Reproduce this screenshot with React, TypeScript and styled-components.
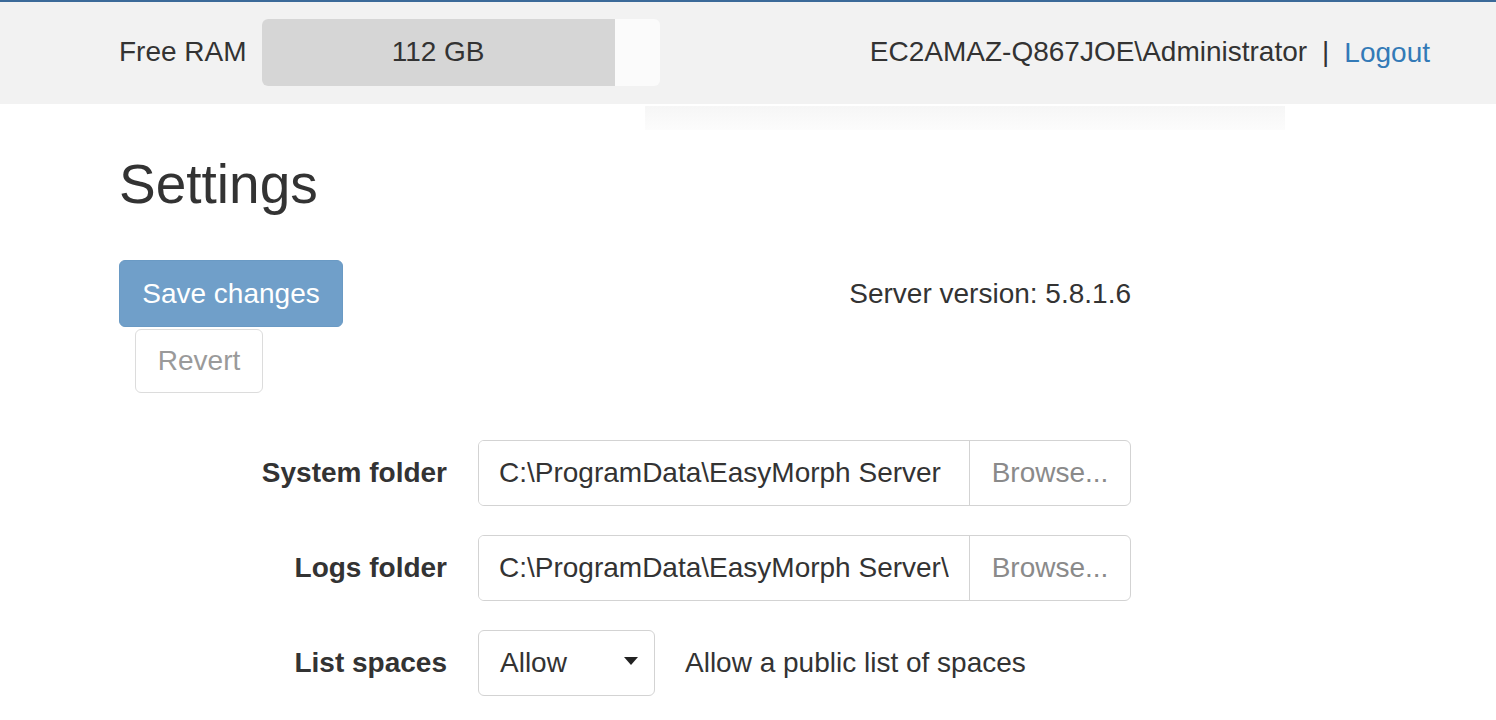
import React, {FC} from 'react';
import styled, {createGlobalStyle} from 'styled-components';

const GlobalStyle = createGlobalStyle`
  html, body {
    margin: 0;
    padding: 0;
    background: #ffffff;
    font-family: 'Liberation Sans', Arial, sans-serif;
    font-size: 28px;
    color: #333333;
  }
  * {
    box-sizing: border-box;
  }
`;

const Page = styled.div`
  width: 1496px;
  height: 720px;
  overflow: hidden;
  position: relative;
  border-top: 2px solid #3b6a99;
`;

const TopBar = styled.div`
  display: flex;
  align-items: center;
  height: 102px;
  padding: 0 66px 0 119px;
  background: #f2f2f2;
`;

const RamLabel = styled.span`
  margin-right: 15px;
  margin-top: -3px;
`;

const RamBar = styled.div`
  display: flex;
  width: 398px;
  height: 67px;
  border-radius: 6px;
  overflow: hidden;
  background: #fbfbfb;
  margin-top: -2px;
`;

const RamFill = styled.div`
  display: flex;
  align-items: center;
  justify-content: center;
  height: 100%;
  background: #d6d6d6;
  color: #333333;
`;

const UserBox = styled.div`
  margin-left: auto;
  display: flex;
  align-items: center;
  gap: 15px;
  margin-top: -3px;
`;

const Separator = styled.span`
  color: #333333;
`;

const Link = styled.a`
  color: #337ab7;
  text-decoration: none;
  margin-top: 2px;
`;

const Ghost = styled.div`
  position: absolute;
  left: 645px;
  top: 104px;
  width: 640px;
  height: 24px;
  background: linear-gradient(#f6f6f6, #fcfcfc);
`;

const Content = styled.div`
  padding: 0 0 0 119px;
`;

const Title = styled.h1`
  margin: 47px 0 0;
  font-size: 55px;
  font-weight: 400;
  line-height: 66px;
  color: #333333;
`;

const ActionRow = styled.div`
  display: flex;
  align-items: center;
  width: 1012px;
  margin-top: 43px;
`;

const Version = styled.div`
  margin-left: auto;
`;

const PrimaryButton = styled.button`
  width: 224px;
  height: 67px;
  border: 1px solid #6a9ac4;
  border-radius: 6px;
  background: #709fc9;
  color: #ffffff;
  font: inherit;
  padding: 0;
`;

const DefaultButton = styled.button`
  display: block;
  width: 128px;
  height: 64px;
  margin: 2px 0 0 16px;
  border: 1px solid #dcdcdc;
  border-radius: 6px;
  background: #ffffff;
  color: #9a9a9a;
  font: inherit;
  padding: 0;
`;

const Form = styled.div`
  display: flex;
  flex-direction: column;
  gap: 29px;
  margin-top: 47px;
`;

const Row = styled.div`
  display: flex;
  align-items: center;
  height: 66px;
`;

const Label = styled.label`
  width: 359px;
  text-align: right;
  font-weight: 700;
  padding-right: 31px;
`;

const InputGroup = styled.div`
  display: flex;
  width: 653px;
  height: 100%;
  border: 1px solid #d3d3d3;
  border-radius: 6px;
  overflow: hidden;
`;

const TextField = styled.input`
  flex: 1;
  min-width: 0;
  height: 100%;
  padding: 0 20px;
  border: none;
  outline: none;
  background: #ffffff;
  color: #333333;
  font: inherit;
`;

const AddonButton = styled.div`
  width: 161px;
  display: flex;
  align-items: center;
  justify-content: center;
  border-left: 1px solid #d3d3d3;
  color: #8a8a8a;
`;

const Select = styled.div`
  display: flex;
  align-items: center;
  justify-content: space-between;
  width: 177px;
  height: 100%;
  padding: 0 16px 0 21px;
  border: 1px solid #d3d3d3;
  border-radius: 6px;
`;

const Caret = styled.span`
  width: 0;
  height: 0;
  border-left: 7px solid transparent;
  border-right: 7px solid transparent;
  border-top: 8px solid #222222;
  margin-top: -4px;
`;

const Help = styled.span`
  margin-left: 30px;
`;

interface FolderRowProps {
  label: string;
  value: string;
}

const FolderRow: FC<FolderRowProps> = ({label, value}) => (
  <Row>
    <Label>{label}</Label>
    <InputGroup>
      <TextField readOnly value={value} />
      <AddonButton>Browse...</AddonButton>
    </InputGroup>
  </Row>
);

const App: FC = () => {
  const ramPercent = 88.7;

  return (
    <Page>
      <GlobalStyle />
      <TopBar>
        <RamLabel>Free RAM</RamLabel>
        <RamBar>
          <RamFill style={{width: `${ramPercent}%`}}>112 GB</RamFill>
        </RamBar>
        <UserBox>
          <span>EC2AMAZ-Q867JOE\Administrator</span>
          <Separator>|</Separator>
          <Link href="#">Logout</Link>
        </UserBox>
      </TopBar>
      <Ghost />
      <Content>
        <Title>Settings</Title>
        <ActionRow>
          <PrimaryButton>Save changes</PrimaryButton>
          <Version>Server version: 5.8.1.6</Version>
        </ActionRow>
        <DefaultButton>Revert</DefaultButton>
        <Form>
          <FolderRow label="System folder" value="C:\ProgramData\EasyMorph Server" />
          <FolderRow label="Logs folder" value="C:\ProgramData\EasyMorph Server\Logs" />
          <Row>
            <Label>List spaces</Label>
            <Select>
              <span>Allow</span>
              <Caret />
            </Select>
            <Help>Allow a public list of spaces</Help>
          </Row>
        </Form>
      </Content>
    </Page>
  );
};

export default App;
